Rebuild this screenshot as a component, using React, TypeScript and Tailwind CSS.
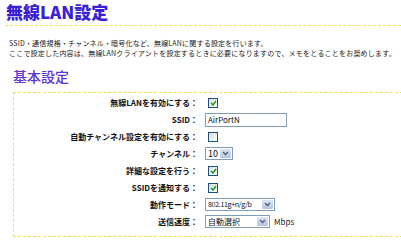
import React from "react";

const jp = "font-['Noto_Sans_CJK_JP','Noto_Sans',sans-serif]";

function Check({ checked }: { checked: boolean }) {
  return (
    <span className="ml-[3px] flex h-[10px] w-[10px] items-center justify-center border border-[#1c5180] bg-gradient-to-br from-[#dcdcd7] to-white">
      {checked && (
        <svg width="7" height="6" viewBox="0 0 7 6">
          <path d="M1 3 L3 5 L6 1" fill="none" stroke="#21a121" strokeWidth="1.6" />
        </svg>
      )}
    </span>
  );
}

function Select({ value, width, textClass }: { value: string; width: string; textClass: string }) {
  return (
    <span className={`flex h-[13px] items-stretch border border-[#7f9db9] bg-white ${width}`}>
      <span className={`flex flex-1 items-center pl-[2px] leading-none text-[#111] ${textClass}`}>{value}</span>
      <span className="m-[1px] flex w-[11px] items-center justify-center rounded-[1px] bg-gradient-to-b from-[#dde5f2] to-[#b5c3dc]">
        <svg width="7" height="5" viewBox="0 0 7 5">
          <path d="M1 1 L3.5 3.5 L6 1" fill="none" stroke="#4d6185" strokeWidth="1.5" />
        </svg>
      </span>
    </span>
  );
}

const rows: { label: string; control: React.ReactNode }[] = [
  { label: "無線LANを有効にする：", control: <Check checked /> },
  {
    label: "SSID：",
    control: (
      <span className="flex h-[14px] w-[82px] items-center border border-[#7f9db9] bg-white pl-[2px] text-[8px] leading-none text-[#111]">
        AirPortN
      </span>
    ),
  },
  { label: "自動チャンネル設定を有効にする：", control: <Check checked={false} /> },
  { label: "チャンネル：", control: <Select value="10" width="w-[28px]" textClass="text-[9px]" /> },
  { label: "詳細な設定を行う：", control: <Check checked /> },
  { label: "SSIDを通知する：", control: <Check checked /> },
  { label: "動作モード：", control: <Select value="802.11g+n/g/b" width="w-[70px]" textClass="text-[7px] tracking-[-0.3px]" /> },
  {
    label: "送信速度：",
    control: (
      <span className="flex items-center gap-[4px]">
        <Select value="自動選択" width="w-[65px]" textClass="text-[8px]" />
        <span className="text-[8px] text-[#222]">Mbps</span>
      </span>
    ),
  },
];

export default function App() {
  return (
    <div className={`h-[247px] w-[401px] overflow-hidden bg-white ${jp}`}>
      <div className="pl-[6px] pt-[2px]">
        <h1 className="text-[17px] font-black leading-[20px] text-[#3a1fd6]">無線LAN設定</h1>
      </div>
      <div className="ml-[5px] mt-[3px] border-b border-dashed border-[#f0e05a]" />

      <div className="mt-[12px] pl-[9px] text-[7px] leading-[10px] tracking-[0.2px] text-[#222]">
        <p>SSID・通信規格・チャンネル・暗号化など、無線LANに関する設定を行います。</p>
        <p>ここで設定した内容は、無線LANクライアントを設定するときに必要になりますので、メモをとることをお奨めします。</p>
      </div>

      <h2 className="mt-[9px] pl-[13px] text-[14px] font-medium leading-[18px] text-[#5b35d6]">基本設定</h2>

      <div className="ml-[13px] mt-[7px] w-[420px] border border-dashed border-[#f0e05a] pb-[6px] pt-[1px]">
        <div className="grid grid-cols-[184px_1fr] gap-x-[7px]">
          {rows.map((r) => (
            <React.Fragment key={r.label}>
              <div className="flex h-[17px] items-center justify-end text-[8px] font-bold leading-none text-[#111]">
                {r.label}
              </div>
              <div className="flex h-[17px] items-center">{r.control}</div>
            </React.Fragment>
          ))}
        </div>
      </div>
    </div>
  );
}
